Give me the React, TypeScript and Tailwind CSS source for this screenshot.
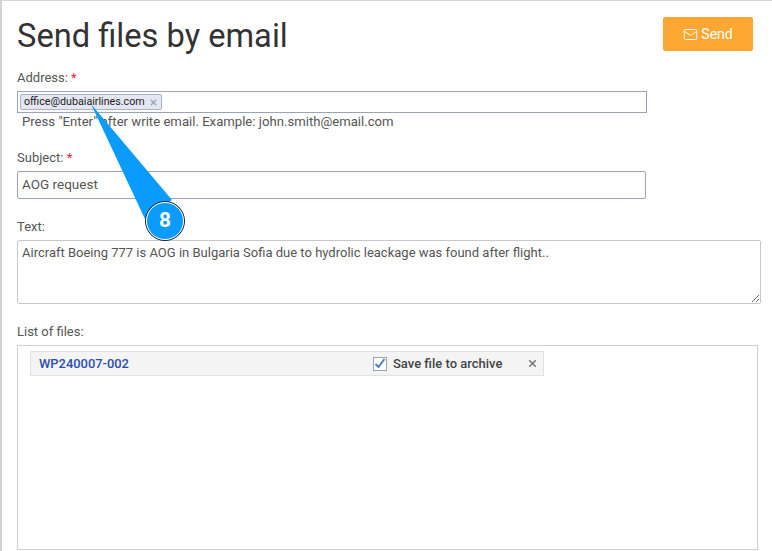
import { Mail, X } from 'lucide-react'

const LABEL = "block pt-[1px] text-[13px] leading-[16px] text-[#555]"

function Required() {
  return <span className="text-[#e0263c]"> *</span>
}

export default function App() {
  return (
    <div className="relative h-[551px] w-[772px] overflow-hidden border-t border-l-2 border-[#d4d4d4] bg-white font-['Roboto',sans-serif] text-[#333]">
      <div className="pl-[15px]">
        {/* Header */}
        <div className="flex h-[68px] items-start justify-between pr-[19px]">
          <h1 className="mt-[15px] text-[32.65px] leading-[40px] font-normal text-[#333]">Send files by email</h1>
          <button className="mt-[16px] flex h-[34px] w-[90px] items-center justify-center gap-[3px] rounded-[2px] bg-[#ffa733] text-[14px] text-white">
            <Mail size={15} strokeWidth={1.5} />
            Send
          </button>
        </div>

        <label className={LABEL}>Address:<Required /></label>
        <div className="mt-[5px] flex h-[22px] w-[630px] items-center border border-[#9aa3b8] pl-[2px]">
          <span className="flex h-[16px] items-center gap-[4px] rounded-[2px] border border-[#aab2c8] bg-[#e4e7f1] pr-[3px] pl-[3px] text-[10.7px] text-[#222]">
            office@dubaiairlines.com
            <X size={9} strokeWidth={4} className="text-[#a0a6b8]" />
          </span>
        </div>
        <p className="mt-[1px] pl-[5px] text-[13.15px] leading-[16px] text-[#555]">
          Press "Enter" after write email. Example: john.smith@email.com
        </p>

        <label className={`${LABEL} mt-[19px]`}>Subject:<Required /></label>
        <div className="mt-[5px] flex h-[28px] w-[629px] items-center rounded-[2px] border border-[#9aa3b8] pb-[2px] pl-[4px] text-[13.5px] text-[#555]">
          AOG request
        </div>

        <label className={`${LABEL} mt-[19px]`}>Text:</label>
        <textarea
          className="mt-[5px] block h-[64px] w-[744px] rounded-[2px] border border-[#c8c8c8] px-[4px] py-[4px] text-[13px] leading-[16px] text-[#555] outline-none"
          defaultValue="Aircraft Boeing 777 is AOG in Bulgaria Sofia due to hydrolic leackage was found after flight.."
        />

        <label className={`${LABEL} mt-[19px]`}>List of files:</label>
        <div className="mt-[5px] h-[205px] w-[741px] border border-[#d0d0d0] pt-[5px] pl-[12px]">
          <div className="flex h-[25px] w-[514px] items-center border border-[#e2e2e2] bg-[#f4f4f4] pl-[8px]">
            <a className="w-[334px] text-[12.9px] font-medium text-[#2a4fb0]">WP240007-002</a>
            <span className="flex h-[14px] w-[14px] items-center justify-center border border-[#9aa6b8] bg-white">
              <svg className="overflow-visible" width="12" height="12" viewBox="0 0 12 12" fill="none">
                <path d="M1.5 6 L4.5 9 L10.5 1" stroke="#4a80bd" strokeWidth="2" />
              </svg>
            </span>
            <span className="ml-[6px] w-[130px] text-[13px] font-medium text-[#444]">Save file to archive</span>
            <X size={11} strokeWidth={3.5} className="ml-[4px] text-[#777]" />
          </div>
        </div>
      </div>

      {/* Callout pointer with the number 8 */}
      <svg className="absolute top-[-1px] left-[-2px]" width="772" height="551" viewBox="0 0 772 551" fill="none">
        <path d="M91 104 L172 200 L145 219 Z" fill="#0a9bff" />
        <circle cx="165" cy="221" r="19.5" fill="#0a9bff" stroke="#222" strokeWidth="1" />
        <circle cx="165" cy="221" r="18.5" stroke="#fff" strokeWidth="1" />
      </svg>
      <span className="absolute top-[207px] left-[155px] w-[16px] text-center text-[21px] leading-[24px] font-bold text-white">8</span>
    </div>
  )
}
